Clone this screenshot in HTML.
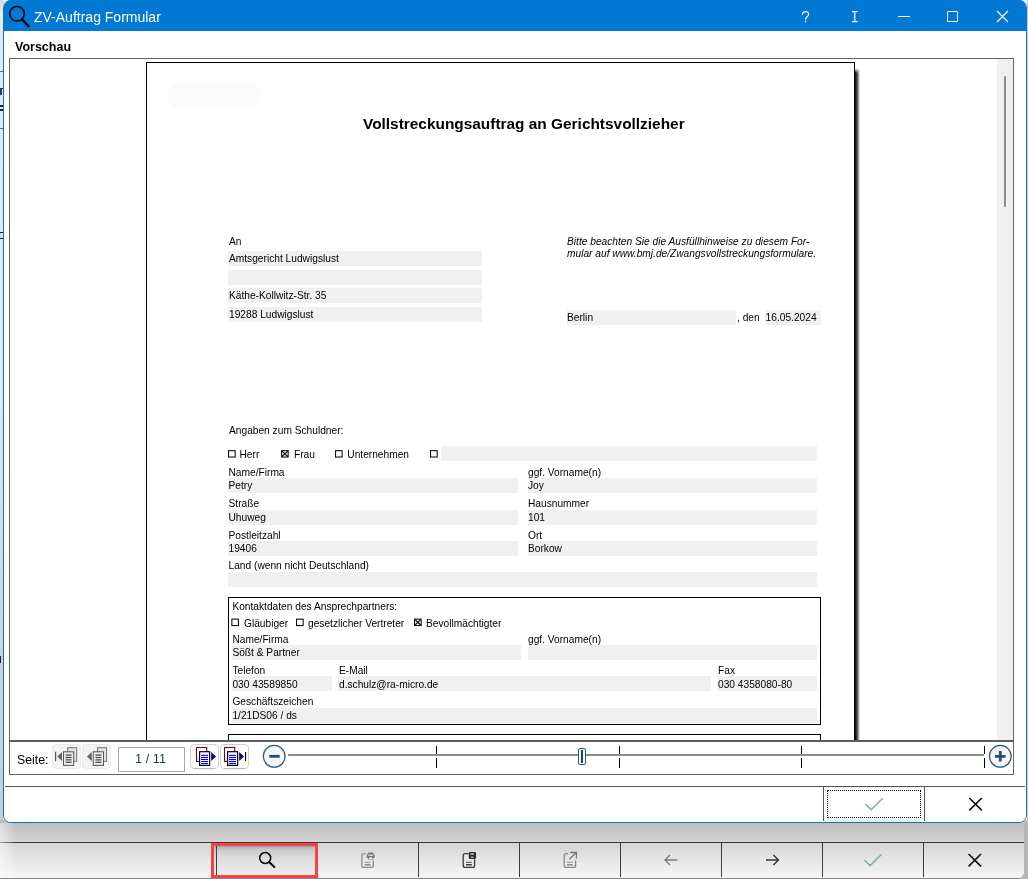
<!DOCTYPE html>
<html><head><meta charset="utf-8"><title>ZV-Auftrag Formular</title>
<style>
html,body{margin:0;padding:0;}
body{width:1028px;height:879px;position:relative;overflow:hidden;background:#f0f0f0;font-family:"Liberation Sans",sans-serif;}
.t{position:absolute;white-space:pre;font-family:"Liberation Sans",sans-serif;}
.r{position:absolute;}
.cb{position:absolute;width:6px;height:6px;border:1px solid #1a1a1a;background:#fff;}
#win{position:absolute;left:3px;top:0;width:1024px;height:823px;background:#fff;border-radius:8px;box-sizing:border-box;border:1px solid #0078d4;overflow:hidden;}
#title{position:absolute;left:0;top:0;width:1024px;height:31px;background:#0078d4;}
#view{position:absolute;left:9px;top:58px;width:1005px;height:683px;box-sizing:border-box;border:1px solid #646464;background:#fff;overflow:hidden;}
#page{position:absolute;left:146px;top:62px;width:709px;height:700px;box-sizing:border-box;border:1px solid #000;background:#fff;}
#nav{position:absolute;left:9px;top:741px;width:1005px;height:34px;box-sizing:border-box;border:1px solid #646464;background:#fff;}
#wrap{position:absolute;left:0;top:0;width:1028px;height:879px;will-change:transform;}
</style></head><body><div id="wrap">

<div class="r" style="left:0;top:0;width:4px;height:842px;background:linear-gradient(#d8d8d8,#ececec 14px,#e8e8e8 15px,#e6e6e6 400px,#d2d2d2 640px,#cacaca);"></div>
<div class="r" style="left:0px;top:71px;width:3px;height:1px;background:#6a6a6a;"></div>
<div class="r" style="left:0px;top:128px;width:3px;height:1px;background:#6a6a6a;"></div>
<div class="r" style="left:0px;top:88px;width:3px;height:1px;background:#333;"></div>
<div class="r" style="left:0px;top:89px;width:2px;height:6px;background:#2a3a6a;"></div>
<div class="r" style="left:0px;top:105px;width:3px;height:2px;background:#222;"></div>
<div class="r" style="left:0px;top:109px;width:3px;height:2px;background:#222;"></div>
<div class="r" style="left:0px;top:232px;width:3px;height:1px;background:#222;"></div>
<div class="r" style="left:0px;top:238px;width:3px;height:1px;background:#222;"></div>
<div class="r" style="left:0px;top:233px;width:2px;height:5px;background:#bfe0ee;"></div>
<div class="r" style="left:0px;top:656px;width:1px;height:7px;background:#4a1020;"></div>
<div class="r" style="left:0;top:820px;width:1028px;height:23px;background:linear-gradient(#b8b8b8,#c4c4c4 40%,#d6d6d6);"></div>
<div class="r" style="left:1024px;top:823px;width:4px;height:56px;background:#b6b6b6;"></div>
<div class="r" style="left:1010px;top:860px;width:18px;height:19px;background:#b6b6b6;"></div>
<div class="r" style="left:0;top:842px;width:1024px;height:36px;background:linear-gradient(#d4d4d4,#e5e5e5 45%,#f6f6f6);border-top:1px solid #3a3a3a;box-sizing:border-box;border-radius:0 0 6px 0;"></div>
<div class="r" style="left:0px;top:878px;width:1019px;height:1px;background:#858585;"></div>
<div class="r" style="left:418px;top:843px;width:1px;height:34px;background:#3c3c3c;"></div>
<div class="r" style="left:519px;top:843px;width:1px;height:34px;background:#3c3c3c;"></div>
<div class="r" style="left:620px;top:843px;width:1px;height:34px;background:#3c3c3c;"></div>
<div class="r" style="left:721px;top:843px;width:1px;height:34px;background:#3c3c3c;"></div>
<div class="r" style="left:822px;top:843px;width:1px;height:34px;background:#3c3c3c;"></div>
<div class="r" style="left:923px;top:843px;width:1px;height:34px;background:#3c3c3c;"></div>
<div class="r" style="left:211px;top:843px;width:107px;height:35px;box-sizing:border-box;border:3px solid #f94144;background:linear-gradient(#a8a8a8,#c8c8c8 12%,#dcdcdc 40%,#ececec);"></div>
<div class="r" style="left:216px;top:846px;width:1px;height:29px;background:#3c3c3c;"></div>
<svg class="r" style="left:0;top:843px" width="1028" height="34" viewBox="0 843 1028 34" fill="none"><circle cx="265.2" cy="858" r="5.5" stroke="#000" stroke-width="1.5"/><path d="M269.3 862.2L274.3 867" stroke="#000" stroke-width="2" stroke-linecap="round"/><path d="M365.8 853.6H363.90000000000003Q361.90000000000003 853.6 361.90000000000003 855.6V865.4Q361.90000000000003 867.4 363.90000000000003 867.4H371.3Q373.3 867.4 373.3 865.4V860.5" stroke="#8a8a8a" stroke-width="1.3"/><path d="M364.7 862.3H370.5" stroke="#8a8a8a" stroke-width="0.9"/><path d="M364.7 864.8H370.5" stroke="#8a8a8a" stroke-width="1.5"/><path d="M368.3 852.6H373L374.6 855.2V858H373.4V859.6H368V858H366.6V855.2Z" fill="#7a7a7a"/><rect x="368.2" y="854.6" width="5" height="1.2" fill="#e4e4e4"/><rect x="369" y="857.4" width="3.4" height="1.6" fill="#efefef"/><path d="M468.40000000000003 853.6H465.20000000000005Q463.20000000000005 853.6 463.20000000000005 855.6V865.4Q463.20000000000005 867.4 465.20000000000005 867.4H472.6Q474.6 867.4 474.6 865.4V859.2" stroke="#3a3a3a" stroke-width="1.3"/><path d="M466.0 862.3H471.8" stroke="#3a3a3a" stroke-width="0.9"/><path d="M466.0 864.8H471.8" stroke="#3a3a3a" stroke-width="1.5"/><rect x="468.8" y="852" width="7.2" height="7" rx="1.2" fill="#2a2a2a"/><rect x="470.4" y="853.2" width="3.6" height="1.6" fill="#bdbdbd"/><rect x="471" y="856.6" width="2.6" height="1.2" fill="#d0d0d0"/><path d="M568.1 853.6H566.2Q564.2 853.6 564.2 855.6V865.4Q564.2 867.4 566.2 867.4H573.6Q575.6 867.4 575.6 865.4V860.5" stroke="#8a8a8a" stroke-width="1.3"/><path d="M567.0 862.3H572.8000000000001" stroke="#8a8a8a" stroke-width="0.9"/><path d="M567.0 864.8H572.8000000000001" stroke="#8a8a8a" stroke-width="1.5"/><path d="M569.4 859.2L576.2 852.6M570.2 852.5H576.4V858.6" stroke="#777" stroke-width="1.3"/><path d="M665 860H677.4M670 855L665 860L670 865" stroke="#7a7a7a" stroke-width="1.3"/><path d="M766 860H778.4M773.4 855L778.4 860L773.4 865" stroke="#333" stroke-width="1.4"/><path d="M864.3 860L870.2 865.6L881.6 854.2" stroke="#78b3a6" stroke-width="1.5"/><path d="M968.6 854L981 866.4M981 854L968.6 866.4" stroke="#111" stroke-width="1.6"/></svg>
<div class="r" style="left:1027px;top:0px;width:1px;height:823px;background:#d2cac2;"></div>
<div class="r" style="left:0;top:823px;width:16px;height:55px;background:linear-gradient(90deg,rgba(255,255,255,.5),rgba(255,255,255,0));"></div>
<div id="win"></div>
<div class="r" style="left:4px;top:0;width:1022px;height:31px;background:#0078d4;border-radius:7px 7px 0 0;"></div>
<div class="t" style="left:34px;top:10.15px;font-size:14px;line-height:14px;font-weight:normal;font-style:normal;color:#fff;">ZV-Auftrag Formular</div>
<svg class="r" style="left:4px;top:0" width="40" height="31" viewBox="4 0 40 31"><circle cx="17" cy="13.8" r="7.3" fill="none" stroke="#000" stroke-width="1.5"/><path d="M22 19.4L28.6 26.2" stroke="#000" stroke-width="2.3" stroke-linecap="round"/></svg>
<svg class="r" style="left:798px;top:8px" width="16" height="18" viewBox="798 8 16 18" fill="none"><path d="M802.4 14.7C802.4 12.7 803.8 11.6 805.5 11.6C807.3 11.6 808.6 12.8 808.6 14.4C808.6 16.6 805.6 16.9 805.6 19.5" stroke="#fff" stroke-width="1.15"/><rect x="804.9" y="20.8" width="1.4" height="1.4" fill="#fff"/></svg>
<svg class="r" style="left:848px;top:8px" width="14" height="16" viewBox="848 8 14 16"><rect x="853.8" y="12" width="1.9" height="9.2" fill="#a6cff0"/><path d="M852 11.6H857.5M852 21.6H857.5" stroke="#fff" stroke-width="1.1" fill="none"/></svg>
<div class="r" style="left:898px;top:16px;width:12px;height:1px;background:#fff;"></div>
<div class="r" style="left:947px;top:11px;width:11px;height:11px;box-sizing:border-box;border:1px solid #fff;border-radius:1px;"></div>
<svg class="r" style="left:995px;top:9px" width="16" height="16" viewBox="995 9 16 16"><path d="M997 11L1008 22M1008 11L997 22" stroke="#fff" stroke-width="1.1"/></svg>
<div class="t" style="left:15px;top:40.82px;font-size:12.5px;line-height:12.5px;font-weight:bold;font-style:normal;color:#000;">Vorschau</div>
<div id="view"></div>
<div class="r" style="left:997px;top:59px;width:16px;height:682px;background:#f0f0f0;"></div>
<div class="r" style="left:1004px;top:76px;width:2px;height:131px;background:#8a8a8a;border-radius:1px;"></div>
<div class="r" style="left:855px;top:69px;width:5px;height:672px;background:linear-gradient(90deg,#000,#444 40%,#aaa 75%,#fff);"></div>
<div class="r" style="left:855px;top:68px;width:6px;height:5px;background:linear-gradient(#fff,rgba(255,255,255,0));"></div>
<div class="r" style="left:146px;top:62px;width:709px;height:679px;box-sizing:border-box;border:1px solid #000;border-bottom:none;background:#fff;"></div>
<div class="r" style="left:167px;top:83px;width:94px;height:25px;background:#fbfbfb;border-radius:12px;"></div>
<div class="t" style="left:363px;top:116.35px;font-size:15.42px;line-height:15.42px;font-weight:bold;font-style:normal;color:#000;">Vollstreckungsauftrag an Gerichtsvollzieher</div>
<div class="t" style="left:229px;top:237.37px;font-size:10.2px;line-height:10.2px;font-weight:normal;font-style:normal;color:#000;">An</div>
<div class="r" style="left:228px;top:251px;width:254px;height:15px;background:#f0f0f0;"></div>
<div class="t" style="left:229px;top:254.37px;font-size:10.2px;line-height:10.2px;font-weight:normal;font-style:normal;color:#000;">Amtsgericht Ludwigslust</div>
<div class="r" style="left:228px;top:270px;width:254px;height:15px;background:#f0f0f0;"></div>
<div class="r" style="left:228px;top:288px;width:254px;height:15px;background:#f0f0f0;"></div>
<div class="t" style="left:229px;top:291.37px;font-size:10.2px;line-height:10.2px;font-weight:normal;font-style:normal;color:#000;">Käthe-Kollwitz-Str. 35</div>
<div class="r" style="left:228px;top:307px;width:254px;height:15px;background:#f0f0f0;"></div>
<div class="t" style="left:229px;top:310.37px;font-size:10.2px;line-height:10.2px;font-weight:normal;font-style:normal;color:#000;">19288 Ludwigslust</div>
<div class="t" style="left:567px;top:237.37px;font-size:10.2px;line-height:10.2px;font-weight:normal;font-style:italic;color:#000;">Bitte beachten Sie die Ausfüllhinweise zu diesem For-</div>
<div class="t" style="left:567px;top:249.37px;font-size:10.2px;line-height:10.2px;font-weight:normal;font-style:italic;color:#000;">mular auf www.bmj.de/Zwangsvollstreckungsformulare.</div>
<div class="r" style="left:567px;top:310px;width:169px;height:15px;background:#f0f0f0;"></div>
<div class="t" style="left:567px;top:313.37px;font-size:10.2px;line-height:10.2px;font-weight:normal;font-style:normal;color:#000;">Berlin</div>
<div class="t" style="left:737px;top:313.37px;font-size:10.2px;line-height:10.2px;font-weight:normal;font-style:normal;color:#000;">, den</div>
<div class="r" style="left:765px;top:310px;width:56px;height:15px;background:#f0f0f0;"></div>
<div class="t" style="left:765.6px;top:313.37px;font-size:10.2px;line-height:10.2px;font-weight:normal;font-style:normal;color:#000;">16.05.2024</div>
<div class="t" style="left:229px;top:426.37px;font-size:10.2px;line-height:10.2px;font-weight:normal;font-style:normal;color:#000;">Angaben zum Schuldner:</div>
<svg class="r" style="left:227px;top:449px" width="12" height="12" viewBox="227 449 12 12"><rect x="228.55" y="450.65000000000003" width="6.6" height="6.4" fill="#fff" stroke="#111" stroke-width="1.1"/></svg>
<div class="t" style="left:239.5px;top:450.37px;font-size:10.2px;line-height:10.2px;font-weight:normal;font-style:normal;color:#000;">Herr</div>
<svg class="r" style="left:280px;top:449px" width="12" height="12" viewBox="280 449 12 12"><rect x="281.55" y="450.65000000000003" width="6.6" height="6.4" fill="#fff" stroke="#111" stroke-width="1.1"/><path d="M281.8 450.90000000000003L287.9 456.8M287.9 450.90000000000003L281.8 456.8" stroke="#111" stroke-width="1.3"/></svg>
<div class="t" style="left:294px;top:450.37px;font-size:10.2px;line-height:10.2px;font-weight:normal;font-style:normal;color:#000;">Frau</div>
<svg class="r" style="left:334px;top:449px" width="12" height="12" viewBox="334 449 12 12"><rect x="335.55" y="450.65000000000003" width="6.6" height="6.4" fill="#fff" stroke="#111" stroke-width="1.1"/></svg>
<div class="t" style="left:347.3px;top:450.37px;font-size:10.2px;line-height:10.2px;font-weight:normal;font-style:normal;color:#000;">Unternehmen</div>
<svg class="r" style="left:429px;top:449px" width="12" height="12" viewBox="429 449 12 12"><rect x="430.55" y="450.65000000000003" width="6.6" height="6.4" fill="#fff" stroke="#111" stroke-width="1.1"/></svg>
<div class="r" style="left:441px;top:446px;width:376px;height:15px;background:#f0f0f0;"></div>
<div class="t" style="left:228.5px;top:467.87px;font-size:10.2px;line-height:10.2px;font-weight:normal;font-style:normal;color:#000;">Name/Firma</div><div class="r" style="left:228px;top:478px;width:290px;height:15px;background:#f0f0f0;"></div><div class="t" style="left:228.5px;top:481.37px;font-size:10.2px;line-height:10.2px;font-weight:normal;font-style:normal;color:#000;">Petry</div><div class="t" style="left:528px;top:467.87px;font-size:10.2px;line-height:10.2px;font-weight:normal;font-style:normal;color:#000;">ggf. Vorname(n)</div><div class="r" style="left:528px;top:478px;width:289px;height:15px;background:#f0f0f0;"></div><div class="t" style="left:528px;top:481.37px;font-size:10.2px;line-height:10.2px;font-weight:normal;font-style:normal;color:#000;">Joy</div>
<div class="t" style="left:228.5px;top:499.37px;font-size:10.2px;line-height:10.2px;font-weight:normal;font-style:normal;color:#000;">Straße</div><div class="r" style="left:228px;top:510px;width:290px;height:15px;background:#f0f0f0;"></div><div class="t" style="left:228.5px;top:512.87px;font-size:10.2px;line-height:10.2px;font-weight:normal;font-style:normal;color:#000;">Uhuweg</div><div class="t" style="left:528px;top:499.37px;font-size:10.2px;line-height:10.2px;font-weight:normal;font-style:normal;color:#000;">Hausnummer</div><div class="r" style="left:528px;top:510px;width:289px;height:15px;background:#f0f0f0;"></div><div class="t" style="left:528px;top:512.87px;font-size:10.2px;line-height:10.2px;font-weight:normal;font-style:normal;color:#000;">101</div>
<div class="t" style="left:228.5px;top:530.87px;font-size:10.2px;line-height:10.2px;font-weight:normal;font-style:normal;color:#000;">Postleitzahl</div><div class="r" style="left:228px;top:541px;width:290px;height:15px;background:#f0f0f0;"></div><div class="t" style="left:228.5px;top:544.37px;font-size:10.2px;line-height:10.2px;font-weight:normal;font-style:normal;color:#000;">19406</div><div class="t" style="left:528px;top:530.87px;font-size:10.2px;line-height:10.2px;font-weight:normal;font-style:normal;color:#000;">Ort</div><div class="r" style="left:528px;top:541px;width:289px;height:15px;background:#f0f0f0;"></div><div class="t" style="left:528px;top:544.37px;font-size:10.2px;line-height:10.2px;font-weight:normal;font-style:normal;color:#000;">Borkow</div>
<div class="t" style="left:228.5px;top:560.87px;font-size:10.2px;line-height:10.2px;font-weight:normal;font-style:normal;color:#000;">Land (wenn nicht Deutschland)</div>
<div class="r" style="left:228px;top:572px;width:589px;height:15px;background:#f0f0f0;"></div>
<div class="r" style="left:228px;top:597px;width:593px;height:128px;box-sizing:border-box;border:1px solid #000;"></div>
<div class="t" style="left:232.4px;top:601.87px;font-size:10.2px;line-height:10.2px;font-weight:normal;font-style:normal;color:#000;">Kontaktdaten des Ansprechpartners:</div>
<svg class="r" style="left:230px;top:617px" width="12" height="12" viewBox="230 617 12 12"><rect x="231.85000000000002" y="619.15" width="6.6" height="6.4" fill="#fff" stroke="#111" stroke-width="1.1"/></svg>
<div class="t" style="left:244px;top:619.37px;font-size:10.2px;line-height:10.2px;font-weight:normal;font-style:normal;color:#000;">Gläubiger</div>
<svg class="r" style="left:295px;top:617px" width="12" height="12" viewBox="295 617 12 12"><rect x="296.55" y="619.15" width="6.6" height="6.4" fill="#fff" stroke="#111" stroke-width="1.1"/></svg>
<div class="t" style="left:308px;top:619.37px;font-size:10.2px;line-height:10.2px;font-weight:normal;font-style:normal;color:#000;">gesetzlicher Vertreter</div>
<svg class="r" style="left:413px;top:617px" width="12" height="12" viewBox="413 617 12 12"><rect x="414.55" y="619.15" width="6.6" height="6.4" fill="#fff" stroke="#111" stroke-width="1.1"/><path d="M414.8 619.4L420.9 625.3000000000001M420.9 619.4L414.8 625.3000000000001" stroke="#111" stroke-width="1.3"/></svg>
<div class="t" style="left:426px;top:619.37px;font-size:10.2px;line-height:10.2px;font-weight:normal;font-style:normal;color:#000;">Bevollmächtigter</div>
<div class="t" style="left:232.4px;top:635.37px;font-size:10.2px;line-height:10.2px;font-weight:normal;font-style:normal;color:#000;">Name/Firma</div>
<div class="r" style="left:232px;top:645px;width:289px;height:15px;background:#f0f0f0;"></div>
<div class="t" style="left:232.4px;top:648.37px;font-size:10.2px;line-height:10.2px;font-weight:normal;font-style:normal;color:#000;">Sößt &amp; Partner</div>
<div class="t" style="left:528px;top:635.37px;font-size:10.2px;line-height:10.2px;font-weight:normal;font-style:normal;color:#000;">ggf. Vorname(n)</div>
<div class="r" style="left:528px;top:645px;width:289px;height:15px;background:#f0f0f0;"></div>
<div class="t" style="left:232.4px;top:665.87px;font-size:10.2px;line-height:10.2px;font-weight:normal;font-style:normal;color:#000;">Telefon</div>
<div class="r" style="left:232px;top:676px;width:100px;height:15px;background:#f0f0f0;"></div>
<div class="t" style="left:232.4px;top:680.37px;font-size:10.2px;line-height:10.2px;font-weight:normal;font-style:normal;color:#000;">030 43589850</div>
<div class="t" style="left:339px;top:665.87px;font-size:10.2px;line-height:10.2px;font-weight:normal;font-style:normal;color:#000;">E-Mail</div>
<div class="r" style="left:338px;top:676px;width:373px;height:15px;background:#f0f0f0;"></div>
<div class="t" style="left:339px;top:680.37px;font-size:10.2px;line-height:10.2px;font-weight:normal;font-style:normal;color:#000;">d.schulz@ra-micro.de</div>
<div class="t" style="left:718px;top:665.87px;font-size:10.2px;line-height:10.2px;font-weight:normal;font-style:normal;color:#000;">Fax</div>
<div class="r" style="left:717px;top:676px;width:100px;height:15px;background:#f0f0f0;"></div>
<div class="t" style="left:718px;top:680.37px;font-size:10.2px;line-height:10.2px;font-weight:normal;font-style:normal;color:#000;">030 4358080-80</div>
<div class="t" style="left:232.4px;top:696.87px;font-size:10.2px;line-height:10.2px;font-weight:normal;font-style:normal;color:#000;">Geschäftszeichen</div>
<div class="r" style="left:232px;top:708px;width:585px;height:15px;background:#f0f0f0;"></div>
<div class="t" style="left:232.4px;top:710.87px;font-size:10.2px;line-height:10.2px;font-weight:normal;font-style:normal;color:#000;">1/21DS06 / ds</div>
<div class="r" style="left:228px;top:734px;width:593px;height:20px;box-sizing:border-box;border:1px solid #000;"></div>
<div class="r" style="left:4px;top:742px;width:1022px;height:80px;background:#fff;border-radius:0 0 7px 7px;"></div>
<div id="nav"></div>
<div class="r" style="left:9px;top:740px;width:1005px;height:2px;background:#5c5c5c;"></div>
<div class="t" style="left:17px;top:753.59px;font-size:12.3px;line-height:12.3px;font-weight:normal;font-style:normal;color:#000;">Seite:</div>
<svg class="r" style="left:0;top:741px" width="1028" height="36" viewBox="0 741 1028 36"><rect x="52.5" y="744.5" width="28" height="24" rx="3.5" fill="#f3f3f3" stroke="#ebebeb"/><rect x="82.5" y="744.5" width="28" height="24" rx="3.5" fill="#f3f3f3" stroke="#ebebeb"/><rect x="55" y="751.8" width="1.2" height="9.4" fill="#555"/><path d="M62 752V761.2L57.3 756.6Z" fill="#666"/><rect x="67.7" y="747.7" width="9" height="13.6" fill="#e2e2e2" stroke="#777" stroke-width="1"/><rect x="63.5" y="751.8" width="10.2" height="13.6" fill="#ececec" stroke="#555" stroke-width="1"/><rect x="65.6" y="754.5" width="6" height="1.2" fill="#444"/><rect x="65.6" y="756.9" width="6" height="1.2" fill="#444"/><rect x="65.6" y="759.3" width="6" height="1.2" fill="#444"/><rect x="65.6" y="761.7" width="6" height="1.2" fill="#444"/><path d="M91.8 752V761.2L87 756.6Z" fill="#666"/><rect x="97.5" y="747.7" width="9" height="13.6" fill="#e2e2e2" stroke="#777" stroke-width="1"/><rect x="93.3" y="751.8" width="10.2" height="13.6" fill="#ececec" stroke="#555" stroke-width="1"/><rect x="95.39999999999999" y="754.5" width="6" height="1.2" fill="#444"/><rect x="95.39999999999999" y="756.9" width="6" height="1.2" fill="#444"/><rect x="95.39999999999999" y="759.3" width="6" height="1.2" fill="#444"/><rect x="95.39999999999999" y="761.7" width="6" height="1.2" fill="#444"/><rect x="190.5" y="744.5" width="28" height="24" rx="3.5" fill="#fdfdfd" stroke="#cfcfcf"/><rect x="220.5" y="744.5" width="28" height="24" rx="3.5" fill="#fdfdfd" stroke="#cfcfcf"/><path d="M194 768.7H215M224 768.7H245" stroke="#b0b0b0" stroke-width="0.8"/><rect x="196.5" y="747.5" width="10.2" height="14" fill="#fff" stroke="#8b0000" stroke-width="1.1"/><rect x="197.2" y="757.5" width="2" height="3.4" fill="#d8d8d8"/><rect x="199.6" y="751.7" width="10" height="13.7" fill="#fff" stroke="#000" stroke-width="1.2"/><rect x="201" y="754.8" width="7" height="1.1" fill="#0000ff"/><rect x="201" y="756.9" width="7" height="1.1" fill="#0000ff"/><rect x="201" y="758.9" width="7" height="1.1" fill="#0000ff"/><rect x="201" y="761" width="7" height="1.1" fill="#0000ff"/><rect x="201" y="763" width="7" height="1.1" fill="#0000ff"/><path d="M211.2 751.9V761L216 756.4Z" fill="#000080"/><rect x="224.5" y="747.5" width="10.2" height="14" fill="#fff" stroke="#8b0000" stroke-width="1.1"/><rect x="225.2" y="757.5" width="2" height="3.4" fill="#d8d8d8"/><rect x="227.6" y="751.7" width="10" height="13.7" fill="#fff" stroke="#000" stroke-width="1.2"/><rect x="229" y="754.8" width="7" height="1.1" fill="#0000ff"/><rect x="229" y="756.9" width="7" height="1.1" fill="#0000ff"/><rect x="229" y="758.9" width="7" height="1.1" fill="#0000ff"/><rect x="229" y="761" width="7" height="1.1" fill="#0000ff"/><rect x="229" y="763" width="7" height="1.1" fill="#0000ff"/><path d="M239.2 751.9V761L244 756.4Z" fill="#000080"/><rect x="245" y="752" width="1.1" height="9" fill="#000"/></svg>
<div class="r" style="left:118px;top:747px;width:67px;height:25px;box-sizing:border-box;border:1px solid #a8a8a8;background:#fff;"></div>
<div class="t" style="left:135px;top:752.56px;font-size:12.8px;line-height:12.8px;font-weight:normal;font-style:normal;color:#1c3a66;">1 / 11</div>
<div class="r" style="left:288px;top:754px;width:696px;height:2px;background:#8c8c8c;"></div>
<div class="r" style="left:436px;top:746px;width:1px;height:8px;background:#000;"></div>
<div class="r" style="left:436px;top:758px;width:1px;height:10px;background:#000;"></div>
<div class="r" style="left:619px;top:746px;width:1px;height:8px;background:#000;"></div>
<div class="r" style="left:619px;top:758px;width:1px;height:10px;background:#000;"></div>
<div class="r" style="left:801px;top:746px;width:1px;height:8px;background:#000;"></div>
<div class="r" style="left:801px;top:758px;width:1px;height:10px;background:#000;"></div>
<div class="r" style="left:984px;top:746px;width:1px;height:8px;background:#000;"></div>
<div class="r" style="left:984px;top:758px;width:1px;height:10px;background:#000;"></div>
<div class="r" style="left:578px;top:748px;width:8px;height:17px;box-sizing:border-box;border:1px solid #2a5a94;border-radius:2px;background:#fff;"></div>
<div class="r" style="left:581px;top:750px;width:2px;height:13px;background:#123f7a;"></div>
<svg class="r" style="left:260px;top:742px" width="30" height="30" viewBox="260 742 30 30"><circle cx="274.2" cy="756.3" r="10.9" fill="#f6f6f6" stroke="#2a5a8c" stroke-width="1.3"/><path d="M269.3 756.3H279.7" stroke="#1f4e79" stroke-width="2.8"/></svg>
<svg class="r" style="left:986px;top:742px" width="30" height="30" viewBox="986 742 30 30"><circle cx="1000.3" cy="756.3" r="10.9" fill="#f6f6f6" stroke="#2a5a8c" stroke-width="1.3"/><path d="M995 756.3H1005.6M1000.3 751V761.6" stroke="#1f4e79" stroke-width="2.8"/></svg>
<div class="r" style="left:5px;top:786px;width:1020px;height:1px;background:#555;"></div>
<div class="r" style="left:823px;top:787px;width:1px;height:34px;background:#555;"></div>
<div class="r" style="left:924px;top:787px;width:1px;height:34px;background:#555;"></div>
<div class="r" style="left:827px;top:790px;width:94px;height:28px;box-sizing:border-box;border:1px dotted #000;"></div>
<svg class="r" style="left:860px;top:792px" width="130" height="24" viewBox="860 792 130 24" fill="none"><path d="M865.3 804L871.2 809.8L882.8 798.2" stroke="#78b3a6" stroke-width="1.5"/><path d="M969.3 798L981.8 810.4M981.8 798L969.3 810.4" stroke="#111" stroke-width="1.6"/></svg>
</div></body></html>
